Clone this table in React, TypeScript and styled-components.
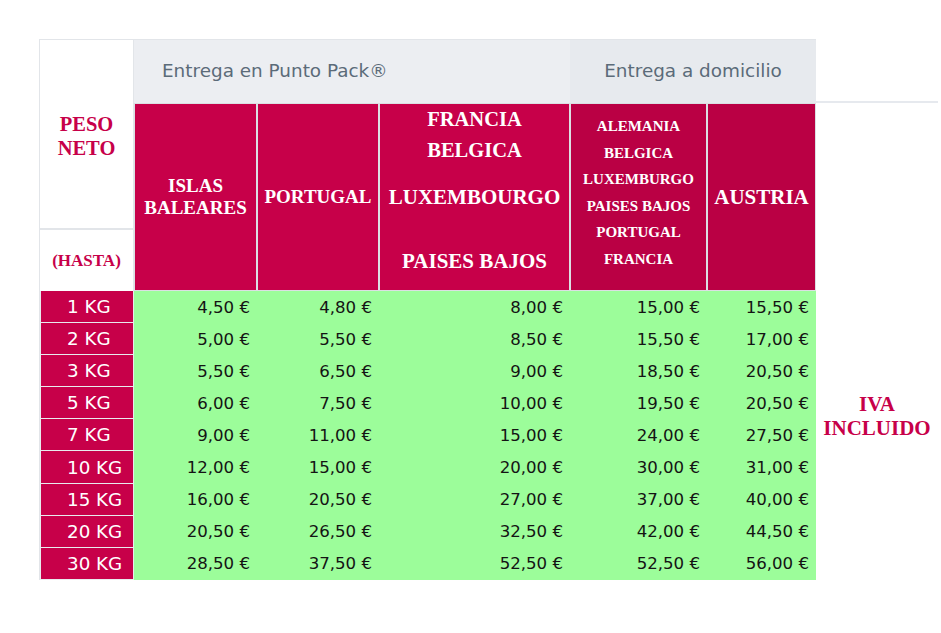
import styled, { createGlobalStyle } from "styled-components";

const Global = createGlobalStyle`
  body {
    margin: 0;
    background: #ffffff;
    font-family: "DejaVu Sans", Verdana, sans-serif;
  }
`;

const CRIMSON = "#c70049";
const CRIMSON_DARK = "#ba0044";
const LINE = "#e2e5e9";

const Table = styled.div`
  display: grid;
  grid-template-columns: 94px 123px 122px 191px 137px 109px 122px;
  grid-template-rows: 64px 188px repeat(9, 32.1px);
  margin: 39px 0 0 39px;
  width: 898px;
  border-left: 1px solid ${LINE};
`;

const LeftHead = styled.div`
  grid-column: 1;
  grid-row: 1 / span 2;
  display: flex;
  flex-direction: column;
  background: #fff;
  border-top: 1px solid ${LINE};
  border-right: 1px solid ${LINE};
`;

const WeightTitle = styled.div<{ $h: number; $size: number; $top?: number }>`
  height: ${(p) => p.$h}px;
  display: flex;
  align-items: center;
  justify-content: center;
  text-align: center;
  padding-top: ${(p) => p.$top || 0}px;
  color: ${CRIMSON};
  font-family: "Liberation Serif", "Times New Roman", serif;
  font-weight: bold;
  font-size: ${(p) => p.$size}px;
  line-height: 24px;
  border-bottom: 2px solid ${LINE};
  box-sizing: border-box;
  &:last-child {
    border-bottom: none;
  }
`;

const GroupHead = styled.div<{ $span: number; $dark?: boolean; $centered?: boolean }>`
  grid-column: span ${(p) => p.$span};
  background: ${(p) => (p.$dark ? "#e7eaee" : "#eceef2")};
  border-top: 1px solid ${LINE};
  color: #5b6b79;
  font-size: 18.4px;
  display: flex;
  align-items: center;
  justify-content: ${(p) => (p.$centered ? "center" : "flex-start")};
  padding-left: ${(p) => (p.$centered ? 0 : 28)}px;
  padding-bottom: 2px;
`;

const Corner = styled.div`
  border-bottom: 2px solid #e6e9ee;
  background: #fff;
`;

const Blank = styled.div`
  background: #fff;
`;

const CountryHead = styled.div<{ $dark?: boolean; $top?: number; $align?: string }>`
  background: ${(p) => (p.$dark ? CRIMSON_DARK : CRIMSON)};
  border: 1px solid #dcdfe3;
  color: #fff;
  font-family: "Liberation Serif", "Times New Roman", serif;
  font-weight: bold;
  display: flex;
  flex-direction: column;
  align-items: center;
  justify-content: ${(p) => p.$align || "center"};
  padding-top: ${(p) => p.$top || 0}px;
  text-align: center;
`;

const Line = styled.span<{ $size: number; $lh: number; $mt?: number }>`
  display: block;
  font-size: ${(p) => p.$size}px;
  line-height: ${(p) => p.$lh}px;
  margin-top: ${(p) => p.$mt || 0}px;
  white-space: nowrap;
`;

const Weight = styled.div`
  background: ${CRIMSON};
  border: 1px solid #e8ebee;
  border-top-width: 0;
  color: #fff;
  font-size: 18.3px;
  display: flex;
  align-items: center;
  padding-left: 26px;
`;

const Price = styled.div`
  background: #9cfd9a;
  color: #141414;
  font-size: 16.6px;
  display: flex;
  align-items: center;
  justify-content: flex-end;
  padding-right: 7px;
`;

const Note = styled.div`
  grid-column: 7;
  grid-row: 3 / span 9;
  display: flex;
  flex-direction: column;
  align-items: center;
  justify-content: center;
  padding-bottom: 38px;
  color: ${CRIMSON};
  font-family: "Liberation Serif", "Times New Roman", serif;
  font-weight: bold;
  font-size: 21px;
  line-height: 24px;
  text-align: center;
`;

const rows = [
  ["1 KG", "4,50 €", "4,80 €", "8,00 €", "15,00 €", "15,50 €"],
  ["2 KG", "5,00 €", "5,50 €", "8,50 €", "15,50 €", "17,00 €"],
  ["3 KG", "5,50 €", "6,50 €", "9,00 €", "18,50 €", "20,50 €"],
  ["5 KG", "6,00 €", "7,50 €", "10,00 €", "19,50 €", "20,50 €"],
  ["7 KG", "9,00 €", "11,00 €", "15,00 €", "24,00 €", "27,50 €"],
  ["10 KG", "12,00 €", "15,00 €", "20,00 €", "30,00 €", "31,00 €"],
  ["15 KG", "16,00 €", "20,50 €", "27,00 €", "37,00 €", "40,00 €"],
  ["20 KG", "20,50 €", "26,50 €", "32,50 €", "42,00 €", "44,50 €"],
  ["30 KG", "28,50 €", "37,50 €", "52,50 €", "52,50 €", "56,00 €"],
];

const homeCountries = ["ALEMANIA", "BELGICA", "LUXEMBURGO", "PAISES BAJOS", "PORTUGAL", "FRANCIA"];

function App() {
  return (
    <>
      <Global />
      <Table>
        <LeftHead>
          <WeightTitle $h={190} $size={20.5} $top={4}>
            PESO
            <br />
            NETO
          </WeightTitle>
          <WeightTitle $h={61} $size={17}>
            (HASTA)
          </WeightTitle>
        </LeftHead>
        <GroupHead $span={3}>Entrega en Punto Pack®</GroupHead>
        <GroupHead $span={2} $dark $centered>
          Entrega a domicilio
        </GroupHead>
        <Corner />

        <CountryHead>
          <Line $size={19} $lh={22}>ISLAS</Line>
          <Line $size={19} $lh={22}>BALEARES</Line>
        </CountryHead>
        <CountryHead>
          <Line $size={19} $lh={22}>PORTUGAL</Line>
        </CountryHead>
        <CountryHead $align="flex-start">
          <Line $size={20.5} $lh={31}>FRANCIA</Line>
          <Line $size={20.5} $lh={31}>BELGICA</Line>
          <Line $size={21} $lh={31} $mt={16}>LUXEMBOURGO</Line>
          <Line $size={21} $lh={31} $mt={33}>PAISES BAJOS</Line>
        </CountryHead>
        <CountryHead $dark $align="flex-start" $top={9}>
          {homeCountries.map((c) => (
            <Line key={c} $size={15} $lh={26.5}>
              {c}
            </Line>
          ))}
        </CountryHead>
        <CountryHead $dark>
          <Line $size={21} $lh={24}>AUSTRIA</Line>
        </CountryHead>
        <Blank />

        <Note>
          <span>IVA</span>
          <span>INCLUIDO</span>
        </Note>
        {rows.map(([label, ...prices]) => [
          <Weight key={label}>{label}</Weight>,
          ...prices.map((p, i) => <Price key={label + i}>{p}</Price>),
        ])}
      </Table>
    </>
  );
}

export default App;
